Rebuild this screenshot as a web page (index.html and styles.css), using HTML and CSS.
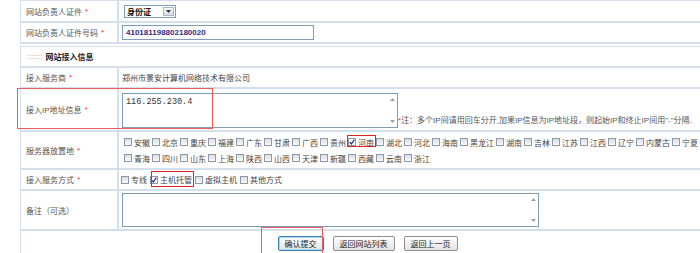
FILE: index.html
```html
<!DOCTYPE html>
<html lang="zh-CN">
<head>
    <meta charset="UTF-8">
    <title>网站接入信息</title>
    <link rel="stylesheet" href="styles.css">
</head>
<body>
<div class="page">
    <!-- 负责人证件 -->
    <div class="tbl tbl-top">
        <div class="lbl">网站负责人证件 <em class="req">*</em></div>
        <div class="val">
            <div class="select">
                <span>身份证</span>
                <span class="select-btn"><svg width="5" height="3" viewBox="0 0 5 3"><path d="M0 0h5L2.5 3z" fill="#333"/></svg></span>
            </div>
        </div>
        <div class="lbl">网站负责人证件号码 <em class="req">*</em></div>
        <div class="val"><div class="input">410181198802180020</div></div>
    </div>

    <!-- 接入信息 -->
    <div class="tbl tbl-main">
        <div class="head"><span class="dots">:::::::</span><b>网站接入信息</b></div>

        <div class="lbl">接入服务商 <em class="req">*</em></div>
        <div class="val">郑州市景安计算机网络技术有限公司</div>

        <div class="lbl">接入IP地址信息 <em class="req">*</em></div>
        <div class="val val-ip">
            <div class="area area-ip">
                <div class="area-text">116.255.230.4</div>
                <div class="scroll">
                    <svg width="5" height="3" viewBox="0 0 5 3"><path d="M0 3h5L2.5 0z" fill="#9aa3ad"/></svg>
                    <svg width="5" height="3" viewBox="0 0 5 3"><path d="M0 0h5L2.5 3z" fill="#9aa3ad"/></svg>
                </div>
            </div>
            <div class="note"><em class="req">*</em>注：多个IP间请用回车分开,加果IP信息为IP地址段，则起始IP和终止IP间用"-"分隔.</div>
        </div>

        <div class="lbl">服务器放置地 <em class="req">*</em></div>
        <div class="val">
            <div class="prov">
                <div class="line">
                    <span class="cb"><i class="box"></i>安徽</span>
                    <span class="cb"><i class="box"></i>北京</span>
                    <span class="cb"><i class="box"></i>重庆</span>
                    <span class="cb"><i class="box"></i>福建</span>
                    <span class="cb"><i class="box"></i>广东</span>
                    <span class="cb"><i class="box"></i>甘肃</span>
                    <span class="cb"><i class="box"></i>广西</span>
                    <span class="cb"><i class="box"></i>贵州</span>
                    <span class="cb"><i class="box on"><svg width="6" height="6" viewBox="0 0 6 6"><path d="M0.6 3.2 2.3 5 5.4 0.6" fill="none" stroke="#1c2a8c" stroke-width="1.2"/></svg></i>河南</span>
                    <span class="cb"><i class="box"></i>湖北</span>
                    <span class="cb"><i class="box"></i>河北</span>
                    <span class="cb"><i class="box"></i>海南</span>
                    <span class="cb"><i class="box"></i>黑龙江</span>
                    <span class="cb"><i class="box"></i>湖南</span>
                    <span class="cb"><i class="box"></i>吉林</span>
                    <span class="cb"><i class="box"></i>江苏</span>
                    <span class="cb"><i class="box"></i>江西</span>
                    <span class="cb"><i class="box"></i>辽宁</span>
                    <span class="cb"><i class="box"></i>内蒙古</span>
                    <span class="cb"><i class="box"></i>宁夏</span>
                </div>
                <div class="line">
                    <span class="cb"><i class="box"></i>青海</span>
                    <span class="cb"><i class="box"></i>四川</span>
                    <span class="cb"><i class="box"></i>山东</span>
                    <span class="cb"><i class="box"></i>上海</span>
                    <span class="cb"><i class="box"></i>陕西</span>
                    <span class="cb"><i class="box"></i>山西</span>
                    <span class="cb"><i class="box"></i>天津</span>
                    <span class="cb"><i class="box"></i>新疆</span>
                    <span class="cb"><i class="box"></i>西藏</span>
                    <span class="cb"><i class="box"></i>云南</span>
                    <span class="cb"><i class="box"></i>浙江</span>
                </div>
            </div>
        </div>

        <div class="lbl">接入服务方式 <em class="req">*</em></div>
        <div class="val val-cb">
            <span class="cb"><i class="box"></i>专线</span>
            <span class="cb"><i class="box on"><svg width="6" height="6" viewBox="0 0 6 6"><path d="M0.6 3.2 2.3 5 5.4 0.6" fill="none" stroke="#1c2a8c" stroke-width="1.2"/></svg></i>主机托管</span>
            <span class="cb"><i class="box"></i>虚拟主机</span>
            <span class="cb"><i class="box"></i>其他方式</span>
        </div>

        <div class="lbl">备注（可选）</div>
        <div class="val">
            <div class="area area-memo">
                <div class="area-text"></div>
                <div class="scroll">
                    <svg width="5" height="3" viewBox="0 0 5 3"><path d="M0 3h5L2.5 0z" fill="#9aa3ad"/></svg>
                    <svg width="5" height="3" viewBox="0 0 5 3"><path d="M0 0h5L2.5 3z" fill="#9aa3ad"/></svg>
                </div>
            </div>
        </div>

        <div class="btns">
            <button class="btn btn-default">确认提交</button>
            <button class="btn">返回网站列表</button>
            <button class="btn">返回上一页</button>
        </div>
    </div>

    <!-- 标注框 -->
    <div class="mark mark-ip"></div>
    <div class="mark mark-henan"></div>
    <div class="mark mark-host"></div>
    <div class="mark mark-submit"></div>
</div>
</body>
</html>
```

FILE: styles.css
```css
* {margin: 0; padding: 0; box-sizing: border-box;}
html, body {overflow: hidden; background: #fff;}
body {width: 700px; height: 253px; font: 8px "Liberation Sans", "Noto Sans CJK SC", sans-serif; color: #555;}
em {font-style: normal;}
.page {position: relative; padding-left: 20px;}

/* 表格 */
.tbl {display: grid; grid-template-columns: 96px minmax(0, 1fr); gap: 2px; width: 694px;
    padding: 1px 0 2px 1px; background: #d3dfea;}
.tbl-top {grid-template-rows: 20px 19px;}
.tbl-main {margin-top: 2px; grid-template-rows: 19px 19px 41px 36px 19px 38px 26px;}
.lbl, .val, .head, .btns {background: #fff; display: flex; align-items: center; white-space: nowrap;}
.lbl {padding-left: 5px;}
.val {padding-left: 3px; color: #444;}
.head, .btns {grid-column: 1 / -1;}
.head {padding-left: 6px; color: #222;}
.head .dots {color: #999; margin-right: 3px;}
.req {color: #f33; margin-left: 3px;}
.note .req {margin: 0;}

/* 下拉, 输入框 */
.select {display: flex; align-items: center; justify-content: space-between; width: 52px; height: 13px;
    margin-left: 2px; padding: 0 1px 0 2px; border: 1px solid #7f9db9; color: #111; font-weight: bold;}
.select-btn {display: flex; align-items: center; justify-content: center; width: 11px; height: 9px;
    background: linear-gradient(#f6f8fb, #d3dbe5); border: 1px solid #a9b7c8;}
.input {display: flex; align-items: center; width: 192px; height: 15px; padding-left: 3px;
    border: 1px solid #7f9db9; color: #352a7c; font-weight: bold;}

/* 多行文本 */
.area {display: flex; border: 1px solid #7f9db9; background: #fff;}
.area-ip {width: 276px; height: 35px;}
.area-memo {width: 417px; height: 34px;}
.area-text {flex: 1; padding: 3px 3px; font: 8.5px "Liberation Mono", monospace; color: #333;}
.scroll {display: flex; flex-direction: column; justify-content: space-between; align-items: center;
    width: 10px; padding: 4px 0;}
.val-ip {align-items: flex-end; padding-bottom: 2px;}
.note {padding-bottom: 3px; color: #555;}

/* 复选框 */
.prov, .val-cb {padding-left: 2px;}
.prov {display: flex; flex-direction: column;}
.line {display: flex; height: 16px; align-items: center;}
.cb {display: inline-flex; align-items: center; margin-right: 2px; color: #444;}
.val-cb .cb {margin-right: 3px;}
.box {display: flex; align-items: center; justify-content: center; width: 8px; height: 8px; margin-right: 2px;
    border: 1px solid #8d98a4; background: linear-gradient(#d9dde2, #fbfbfc);}
.box.on {background: #fff;}

/* 按钮 */
.btns {justify-content: center; align-items: flex-start; padding-top: 5px; gap: 9px;}
.btn {height: 15px; padding: 0 6px; font: inherit; color: #222; border: 1px solid #8e8f8f; border-radius: 2px;
    background: linear-gradient(#fdfdfd, #e4e4e4);}
.btn-default {border-color: #3c7fb1; box-shadow: inset 0 0 0 1px #a7d8f3;}

/* 红色标注框 */
.mark {position: absolute; border: 1px solid #e52222;}
.mark-ip {left: 17px; top: 88px; width: 196px; height: 41px; border-color: #ea5a5e;}
.mark-henan {left: 347px; top: 135px; width: 29px; height: 12px;}
.mark-host {left: 151px; top: 171px; width: 43px; height: 16px;}
.mark-submit {left: 261px; top: 227px; width: 62px; height: 30px; border-color: #ea5a5e;}
```
